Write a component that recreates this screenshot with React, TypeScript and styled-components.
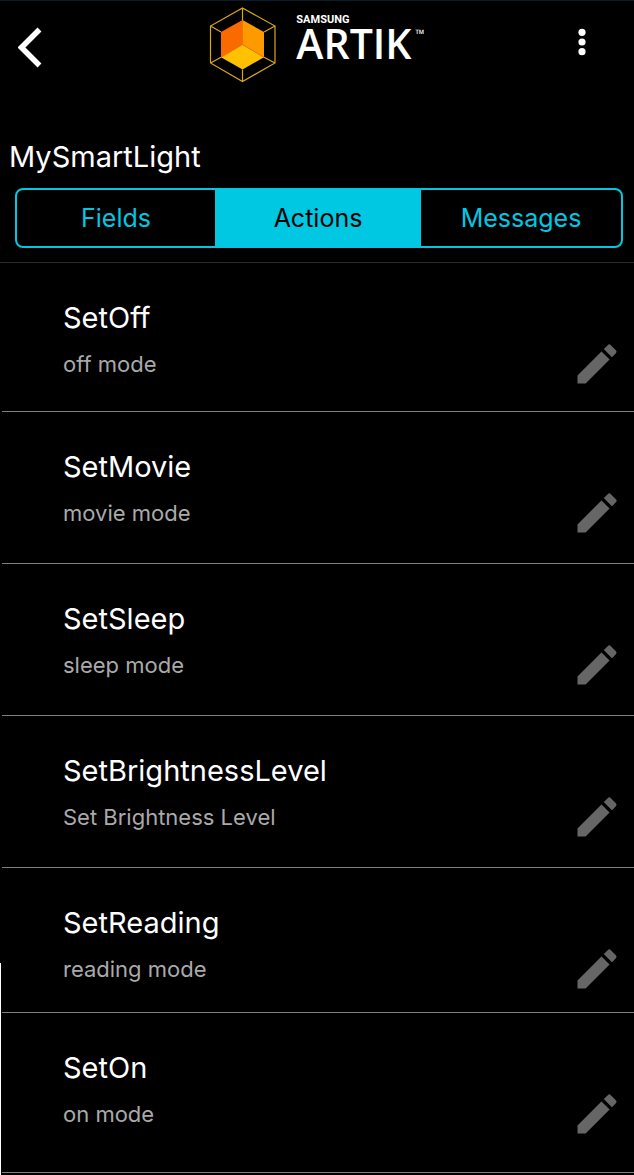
import React, { useState } from "react";
import styled, { createGlobalStyle } from "styled-components";

const GlobalStyle = createGlobalStyle`
  *, *::before, *::after { box-sizing: border-box; }
  body {
    margin: 0;
    background: #000;
    color: #fff;
    font-family: Inter, "Liberation Sans", sans-serif;
  }
`;

const Page = styled.div`
  position: relative;
  min-height: 100vh;
  border-top: 1px solid #0a1d2f;
`;

const EdgeLine = styled.span`
  position: absolute;
  left: 0;
  bottom: 0;
  width: 1px;
  height: 212px;
  background: #fff;
`;

const Header = styled.header`
  display: grid;
  grid-template-columns: 1fr auto 1fr;
  align-items: start;
  padding: 6px 40px 0 10px;
`;

const IconButton = styled.button<{ $end?: boolean }>`
  display: flex;
  justify-self: ${(p) => (p.$end ? "end" : "start")};
  padding: ${(p) => (p.$end ? "20px 8px" : "20px 8px 18px")};
  border: 0;
  background: none;
  color: #fff;
  cursor: pointer;
`;

const Brand = styled.div`
  display: flex;
  align-items: flex-start;
  gap: 20px;
  margin-left: 30px;
`;

const Wordmark = styled.div`
  display: flex;
  flex-direction: column;
  padding-top: 7px;
`;

const Maker = styled.span`
  font: 700 11px/12px Roboto, sans-serif;
`;

const Product = styled.span`
  display: flex;
  gap: 4px;
  font: 600 41px/34px "Open Sans", sans-serif;
`;

const Trademark = styled.span`
  font: 400 12px/12px "Open Sans", sans-serif;
  padding-top: 2px;
`;

const DeviceName = styled.h1`
  margin: 0;
  padding: 52px 9px 0;
  font-size: 29px;
  font-weight: 400;
  line-height: 36px;
`;

const Tabs = styled.div`
  display: grid;
  grid-template-columns: 198fr 206fr 200fr;
  height: 60px;
  margin: 13px 11px 14px 15px;
  border: 2px solid #00c8e3;
  border-radius: 8px;
  overflow: hidden;
`;

const Tab = styled.button<{ $active: boolean }>`
  border: 0;
  padding: 0;
  background: ${(p) => (p.$active ? "#00c8e3" : "transparent")};
  color: ${(p) => (p.$active ? "#000" : "#00c8e3")};
  font: inherit;
  font-size: 25px;
  cursor: pointer;
`;

const List = styled.ul`
  margin: 0;
  padding: 0 0 0 2px;
  list-style: none;
  border-top: 1px solid #2b2b2b;
`;

const Row = styled.li<{ $height: number }>`
  display: flex;
  justify-content: space-between;
  align-items: flex-start;
  min-height: ${(p) => p.$height}px;
  padding: 37px 11px 0 61px;
  border-bottom: 1px solid #808080;
`;

const ActionName = styled.h2`
  margin: 0;
  font-size: 29px;
  font-weight: 400;
  line-height: 36px;
`;

const Description = styled.p`
  margin: 14px 0 0;
  color: #aaa;
  font-size: 22px;
  line-height: 28px;
`;

const EditButton = styled.button`
  display: flex;
  margin-top: 38px;
  padding: 0;
  border: 0;
  background: none;
  color: #666;
  cursor: pointer;
`;

const tabs = ["Fields", "Actions", "Messages"];

const actions = [
  { name: "SetOff", description: "off mode", height: 149 },
  { name: "SetMovie", description: "movie mode", height: 152 },
  { name: "SetSleep", description: "sleep mode", height: 152 },
  { name: "SetBrightnessLevel", description: "Set Brightness Level", height: 152 },
  { name: "SetReading", description: "reading mode", height: 145 },
  { name: "SetOn", description: "on mode", height: 160 },
];

const BackIcon = () => (
  <svg width="24" height="42" viewBox="0 0 24 42" aria-hidden="true">
    <path d="M21.5 2.5 3.5 20.5l18 18" fill="none" stroke="currentColor" strokeWidth="5.5" />
  </svg>
);

const MoreIcon = () => (
  <svg width="8" height="30" viewBox="0 0 8 30" fill="currentColor" aria-hidden="true">
    <circle cx="4" cy="5.3" r="3.6" />
    <circle cx="4" cy="15" r="3.6" />
    <circle cx="4" cy="24.7" r="3.6" />
  </svg>
);

const CubeLogo = () => (
  <svg width="67" height="76" viewBox="0 0 67 76" aria-hidden="true">
    <path d="M33.5 13 12 25v25.5l21.500-13z" fill="#f96a00" />
    <path d="M33.5 13 55 25v25.5l-21.500-13z" fill="#ff9900" />
    <path d="M33.5 37.5 55 50.3 33.5 62.5 12 50.3z" fill="#ffc000" />
    <path d="M12 50.3 33.5 37.5 55 50.3M33.5 13v24.5" fill="none" stroke="#f07800" strokeWidth="1" />
    <path
      d="M33.5 1 66 19v37L33.5 74.5 1.5 56V19zM33.5 1v12M1.5 19 12 25M66 19 55 25M1.5 56 12 50.3M66 56 55 50.3M33.5 62.5v12"
      fill="none"
      stroke="#dba41c"
      strokeWidth="1.2"
    />
  </svg>
);

const PencilIcon = () => (
  <svg width="52" height="52" viewBox="0 0 24 24" fill="currentColor" aria-hidden="true">
    <path d="M3 17.25V21h3.75L17.81 9.94l-3.75-3.75L3 17.25zM20.71 7.04a1 1 0 0 0 0-1.41l-2.34-2.34a1 1 0 0 0-1.41 0l-1.83 1.83 3.75 3.75 1.83-1.83z" />
  </svg>
);

export default function App() {
  const [active, setActive] = useState("Actions");
  return (
    <Page>
      <GlobalStyle />
      <Header>
        <IconButton aria-label="Back">
          <BackIcon />
        </IconButton>
        <Brand>
          <CubeLogo />
          <Wordmark>
            <Maker>SAMSUNG</Maker>
            <Product>
              ARTIK<Trademark>™</Trademark>
            </Product>
          </Wordmark>
        </Brand>
        <IconButton $end aria-label="More options">
          <MoreIcon />
        </IconButton>
      </Header>
      <main>
        <DeviceName>MySmartLight</DeviceName>
        <Tabs role="tablist">
          {tabs.map((tab) => (
            <Tab
              key={tab}
              role="tab"
              aria-selected={tab === active}
              $active={tab === active}
              onClick={() => setActive(tab)}
            >
              {tab}
            </Tab>
          ))}
        </Tabs>
        <List>
          {actions.map((action) => (
            <Row key={action.name} $height={action.height}>
              <div>
                <ActionName>{action.name}</ActionName>
                <Description>{action.description}</Description>
              </div>
              <EditButton aria-label={`Edit ${action.name}`}>
                <PencilIcon />
              </EditButton>
            </Row>
          ))}
        </List>
      </main>
      <EdgeLine />
    </Page>
  );
}
